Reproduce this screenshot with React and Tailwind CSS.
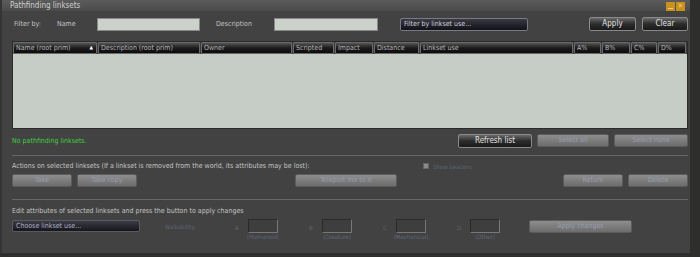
import React from "react";

const font = "font-['DejaVu_Sans_Condensed','DejaVu_Sans',sans-serif]";

function DarkBtn({ w, children }) {
  return (
    <div
      className={`${w} h-[14px] flex items-center justify-center rounded-[2px] border border-[#8a8a8a] bg-gradient-to-b from-[#6a6a6a] via-[#2c2c2c] to-[#1a1a1a] text-[#e4e4e4] text-[8px]`}
    >
      {children}
    </div>
  );
}

function OffBtn({ w, children }) {
  return (
    <div
      className={`${w} h-[13px] flex items-center justify-center rounded-[2px] border border-[#5c5c5c] bg-gradient-to-b from-[#8e8e8e] to-[#6c6c6c] text-[#959cb2] text-[7px]`}
    >
      {children}
    </div>
  );
}

function Col({ w, children, arrow }) {
  return (
    <div
      className={`${w} h-full flex items-center justify-between pl-[2px] pr-[3px] border border-[#6a6a6a] rounded-[1px] bg-gradient-to-b from-[#555] via-[#1c1c1c] to-[#0c0c0c] text-[#b8b8b8] text-[7px] whitespace-nowrap overflow-hidden`}
    >
      <span>{children}</span>
      {arrow && <span className="text-[5px] text-white">▲</span>}
    </div>
  );
}

function Coef({ letter, label }) {
  return (
    <div className="flex items-start">
      <span className="w-[8px] mt-[4px] text-[6px] text-[#5e6474]">{letter}</span>
      <div className="w-[40px] flex flex-col items-center">
        <div className="w-[30px] h-[14px] border border-[#777] border-t-[#2a2a2a] border-l-[#2a2a2a] bg-[#3e3e3e]" />
        <span className="text-center text-[6px] leading-[8px] text-[#5e6878] whitespace-nowrap">
          {label}
        </span>
      </div>
    </div>
  );
}

export default function App() {
  return (
    <div className={`w-[700px] h-[257px] bg-[#2e2e2c] overflow-hidden ${font}`}>
      <div className="w-[690px] h-[253px] bg-[#424242] border-l-[2px] border-[#353535] flex flex-col">
        {/* title */}
        <div className="h-[11px] flex items-center justify-between bg-gradient-to-b from-[#5c5c5c] to-[#4a4a4a] pl-[8px] pr-[5px]">
          <span className="text-[8px] text-[#cfcfcf]">Pathfinding linksets</span>
          <div className="flex gap-[1px] mt-[2px]">
            <div className="w-[9px] h-[9px] bg-[#c8901c] flex items-end justify-center pb-[2px]">
              <div className="w-[5px] h-[1px] bg-[#f5d27a]" />
            </div>
            <div className="w-[9px] h-[9px] bg-[#c8901c] flex items-center justify-center text-[7px] leading-none text-[#f5d27a]">✕</div>
          </div>
        </div>

        {/* filter row */}
        <div className="mt-[6px] h-[14px] flex items-center text-[7px] text-[#c4c4c4]">
          <span className="ml-[12px] w-[43px]">Filter by:</span>
          <span className="w-[40px]">Name</span>
          <div className="w-[103px] h-[13px] bg-[#cdd1cc] border border-[#888]" />
          <span className="ml-[16px] w-[58px]">Description</span>
          <div className="w-[104px] h-[13px] bg-[#cdd1cc] border border-[#888]" />
          <div className="ml-[22px] w-[128px] h-[13px] flex items-center pl-[3px] rounded-[2px] border border-[#7a7a86] bg-gradient-to-b from-[#3a3a44] to-[#111118] text-[#d0d0d8]">
            Filter by linkset use...
          </div>
          <div className="ml-[61px] flex gap-[6px]">
            <DarkBtn w="w-[47px]">Apply</DarkBtn>
            <DarkBtn w="w-[46px]">Clear</DarkBtn>
          </div>
        </div>

        {/* table */}
        <div className="mt-[10px] ml-[10px] w-[676px] h-[88px] bg-[#c6ccc6] border border-[#2a2a2a] flex flex-col">
          <div className="h-[12px] flex gap-[1px] bg-[#3a3a3a]">
            <Col w="w-[84px]" arrow>Name (root prim)</Col>
            <Col w="w-[102px]">Description (root prim)</Col>
            <Col w="w-[91px]">Owner</Col>
            <Col w="w-[41px]">Scripted</Col>
            <Col w="w-[38px]">Impact</Col>
            <Col w="w-[45px]">Distance</Col>
            <Col w="w-[153px]">Linkset use</Col>
            <Col w="w-[27px]">A%</Col>
            <Col w="w-[28px]">B%</Col>
            <Col w="w-[26px]">C%</Col>
            <Col w="w-[28px]">D%</Col>
          </div>
        </div>

        {/* status row */}
        <div className="mt-[5px] h-[14px] flex items-center">
          <span className="ml-[10px] text-[7px] text-[#3ecf3e]">No pathfinding linksets.</span>
          <div className="ml-auto mr-[2px] flex gap-[5px]">
            <DarkBtn w="w-[74px]">Refresh list</DarkBtn>
            <OffBtn w="w-[72px]">Select all</OffBtn>
            <OffBtn w="w-[74px]">Select none</OffBtn>
          </div>
        </div>

        <div className="mt-[7px] ml-[10px] w-[676px] h-[1px] bg-[#666]" />

        <div className="mt-[5px] h-[10px] flex items-center text-[7px] text-[#c4c4c4]">
          <span className="ml-[10px] w-[411px]">
            Actions on selected linksets (If a linkset is removed from the world, its attributes may be lost):
          </span>
          <div className="w-[6px] h-[6px] bg-[#8a8a8a] border border-[#666]" />
          <span className="ml-[4px] text-[6px] text-[#5e6474]">Show beacons</span>
        </div>

        <div className="mt-[3px] h-[13px] flex items-center">
          <div className="ml-[10px] flex gap-[5px]">
            <OffBtn w="w-[60px]">Take</OffBtn>
            <OffBtn w="w-[60px]">Take copy</OffBtn>
          </div>
          <div className="ml-[158px]">
            <OffBtn w="w-[102px]">Teleport me to it</OffBtn>
          </div>
          <div className="ml-auto mr-[2px] flex gap-[5px]">
            <OffBtn w="w-[60px]">Return</OffBtn>
            <OffBtn w="w-[60px]">Delete</OffBtn>
          </div>
        </div>

        <div className="mt-[12px] ml-[10px] w-[676px] h-[1px] bg-[#666]" />

        <div className="mt-[6px] h-[10px] flex items-center text-[7px] text-[#c4c4c4]">
          <span className="ml-[10px]">Edit attributes of selected linksets and press the button to apply changes</span>
        </div>

        <div className="mt-[3px] flex items-start">
          <div className="ml-[10px] mt-[1px] w-[128px] h-[12px] flex items-center pl-[3px] rounded-[2px] border border-[#5a5a62] bg-gradient-to-b from-[#3c3c46] to-[#16161c] text-[7px] text-[#aab0c4]">
            Choose linkset use...
          </div>
          <span className="ml-[25px] mt-[3px] w-[70px] text-[6px] text-[#5e6474]">Walkability:</span>
          <div className="flex gap-[26px]">
            <Coef letter="A" label="(Humanoid)" />
            <Coef letter="B" label="(Creature)" />
            <Coef letter="C" label="(Mechanical)" />
            <Coef letter="D" label="(Other)" />
          </div>
          <div className="ml-[24px] mt-[1px]">
            <OffBtn w="w-[103px]">Apply changes</OffBtn>
          </div>
        </div>
      </div>
    </div>
  );
}
